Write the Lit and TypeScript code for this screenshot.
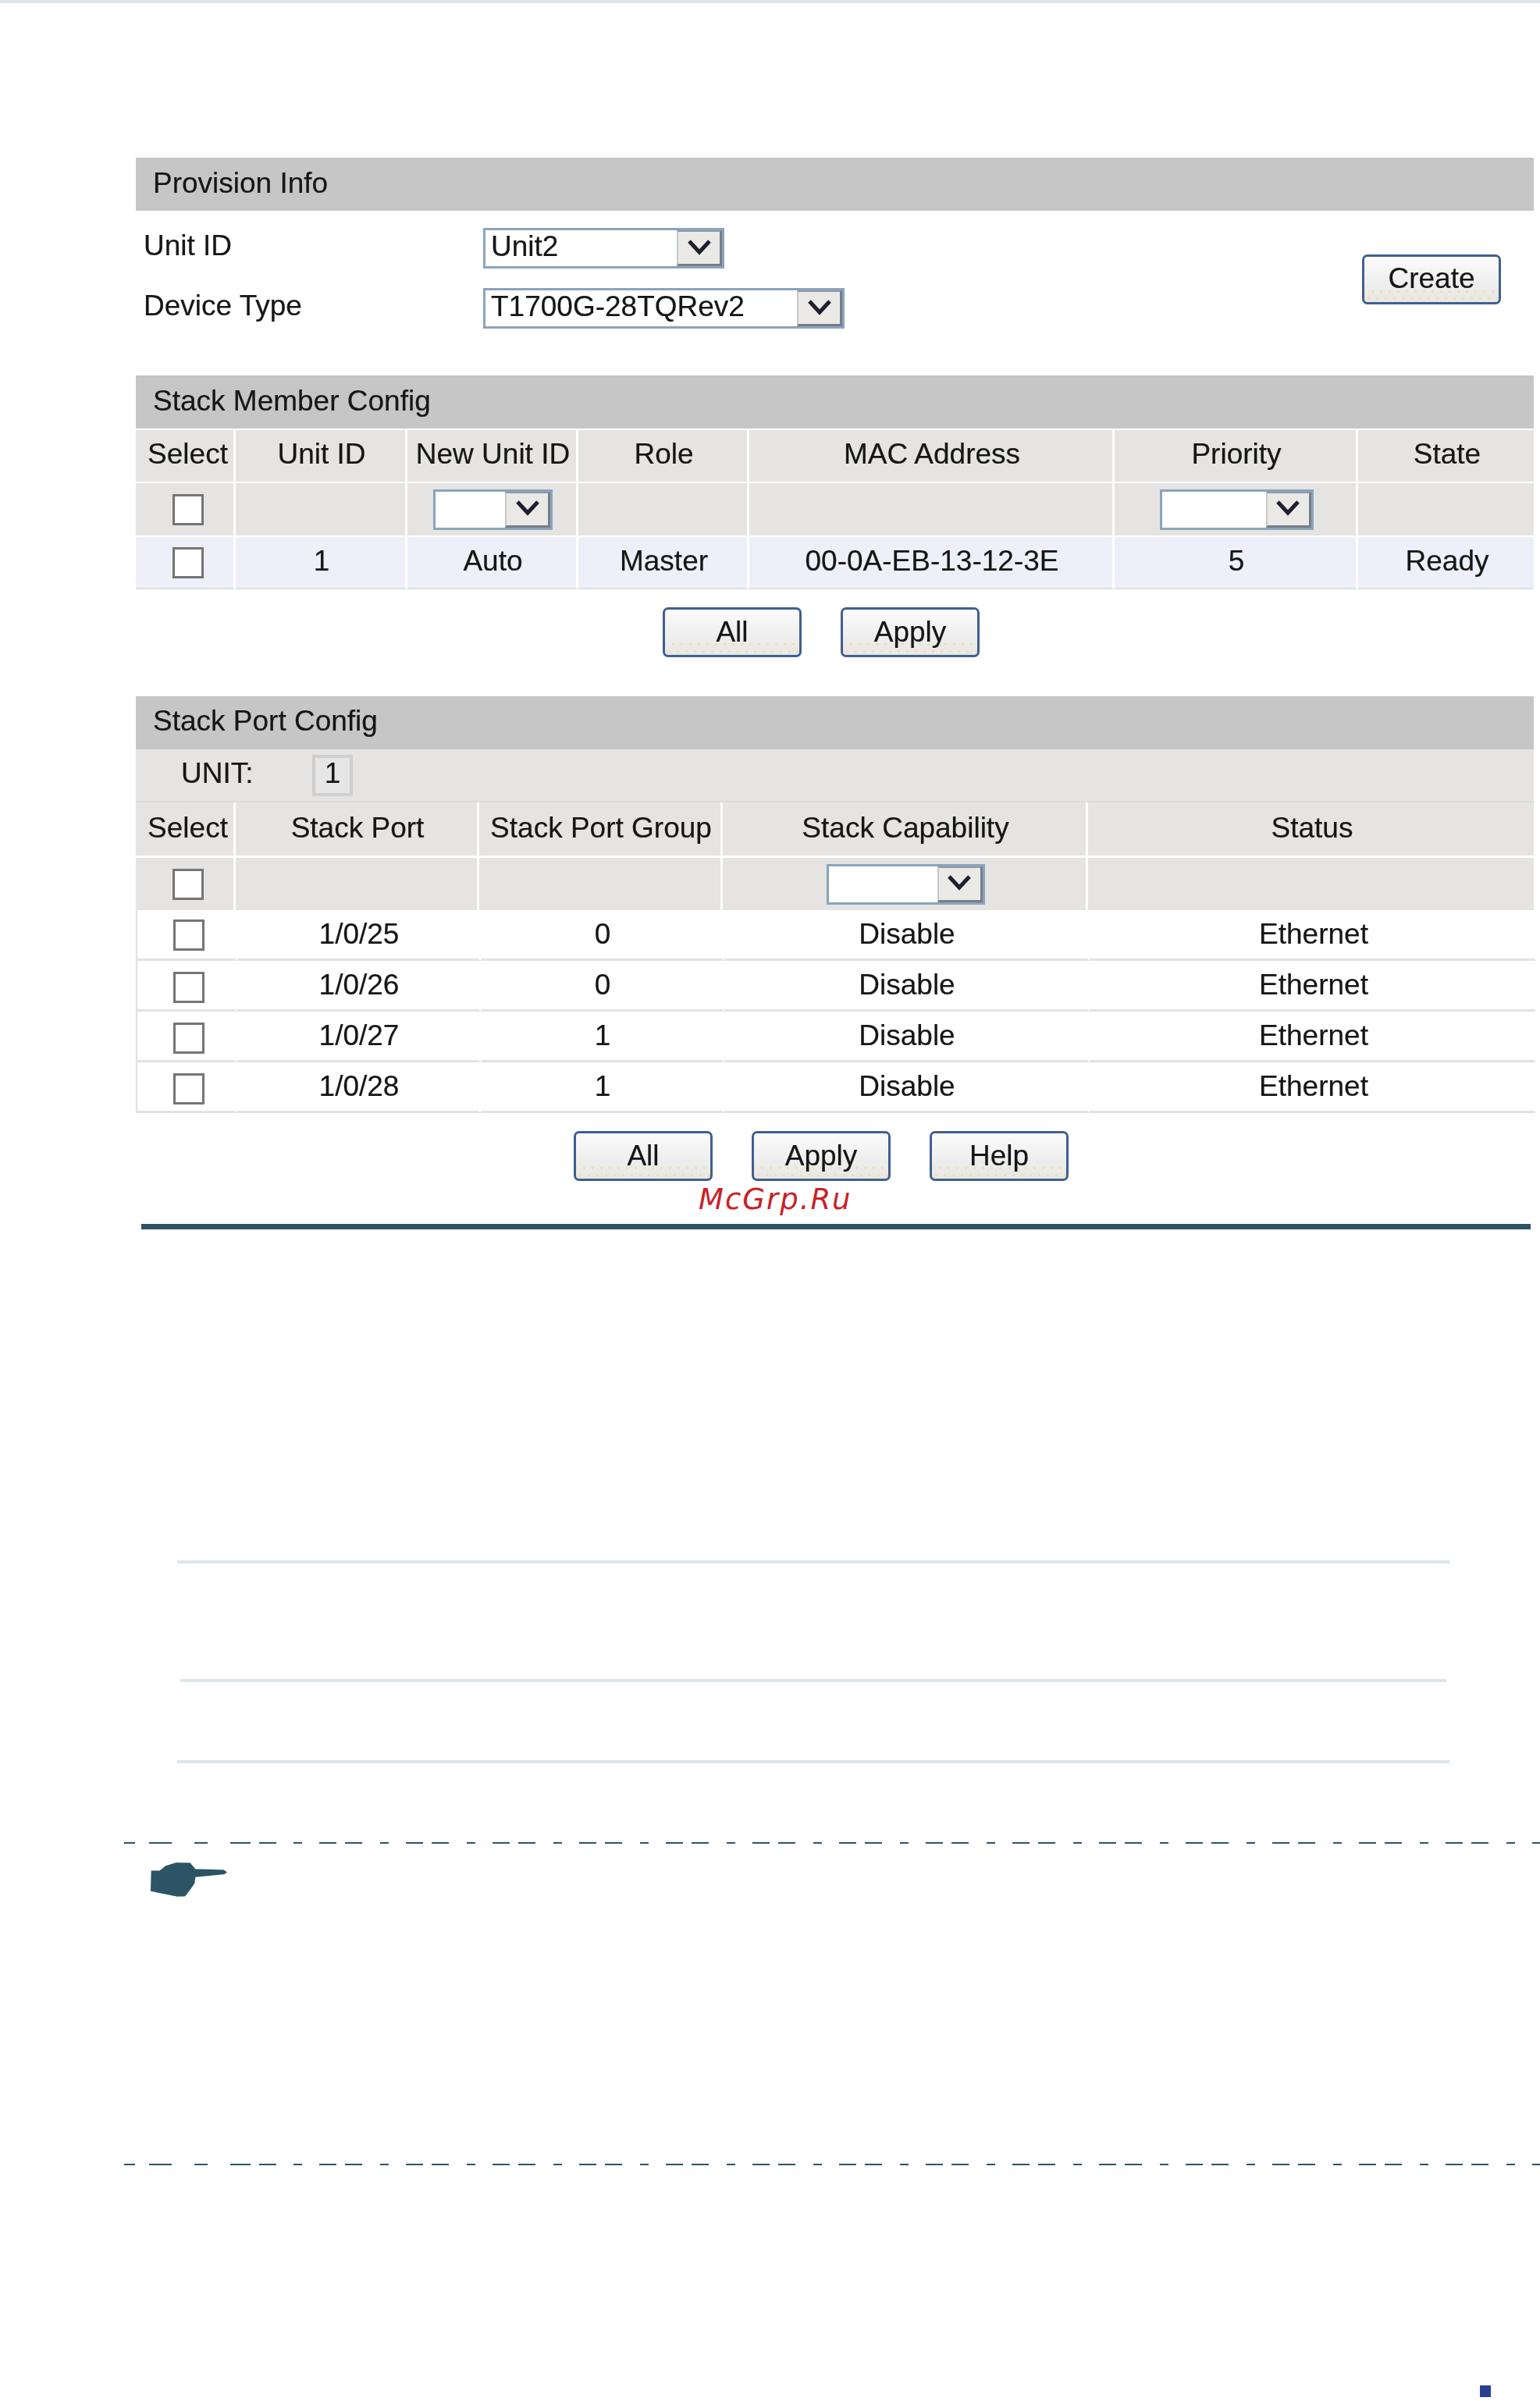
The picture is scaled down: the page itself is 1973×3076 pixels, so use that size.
import { LitElement, html, css, svg } from 'lit';
import { customElement } from 'lit/decorators.js';

const chevron = html`<svg class="chevron" viewBox="0 0 30 21"><path d="M2 3 L15 17 L28 3" /></svg>`;

// dashes of the note frame, irregular start and then a repeating run
const dashRuns = (): number[][] => {
  const runs = [[159, 173], [191, 220], [249, 266], [295, 321], [332, 354]];
  for (let x = 376; x < 1973; x += 111) {
    runs.push([x, x + 11], [x + 33, x + 55], [x + 66, x + 88]);
  }
  return runs;
};

const members = [{ unit: '1', newUnit: 'Auto', role: 'Master', mac: '00-0A-EB-13-12-3E', priority: '5', state: 'Ready' }];

const ports = [
  { port: '1/0/25', group: '0', cap: 'Disable', status: 'Ethernet' },
  { port: '1/0/26', group: '0', cap: 'Disable', status: 'Ethernet' },
  { port: '1/0/27', group: '1', cap: 'Disable', status: 'Ethernet' },
  { port: '1/0/28', group: '1', cap: 'Disable', status: 'Ethernet' },
];

@customElement('app-root')
export class AppRoot extends LitElement {
  static styles = css`
    :host {
      display: block;
      background: #fff;
      font-family: 'Liberation Sans', Arial, sans-serif;
      font-size: 37px;
      color: #161616;
      height: 3076px;
      overflow: hidden;
    }

    .topbar {
      height: 4px;
      background: #dce6eb;
    }

    .section {
      width: 1791px;
      margin-left: 174px;
      filter: blur(0.5px);
      -webkit-text-stroke: 0.2px #161616;
    }
    .section.first {
      margin-top: 198px;
    }
    .section.third {
      margin-top: 50px;
    }

    .title {
      height: 68px;
      line-height: 66px;
      padding-left: 22px;
      background: #c6c6c6;
    }
    .third .title {
      line-height: 63px;
    }

    .form {
      height: 211px;
      display: flex;
      justify-content: space-between;
      padding: 22px 42px 0 10px;
      box-sizing: border-box;
    }
    .fields {
      display: flex;
      flex-direction: column;
      gap: 25px;
    }
    .field {
      display: flex;
      align-items: center;
    }
    .field label {
      width: 435px;
      padding-bottom: 6px;
    }
    .form .btn {
      margin-top: 34px;
      padding-bottom: 3px;
    }

    .select {
      display: flex;
      height: 52px;
      box-sizing: border-box;
      border: 3px solid #8ba4bd;
      background: #fff;
      font-size: 37px;
    }
    .cell .select {
      margin-top: 3px;
    }
    .select .value {
      flex: 1;
      line-height: 42px;
      padding-left: 7px;
    }
    .select .arrow {
      width: 58px;
      box-sizing: border-box;
      display: flex;
      align-items: center;
      justify-content: center;
      background: #ebe9e6;
      border: 3px solid #757d88;
      border-left: 2px solid #c4c8cc;
      border-top: 2px solid #8a99aa;
    }
    .chevron {
      width: 30px;
      height: 21px;
      margin-bottom: 3px;
    }
    .chevron path {
      fill: none;
      stroke: #1c2030;
      stroke-width: 5;
    }
    .w-unit { width: 309px; }
    .w-device { width: 463px; }
    .w-new { width: 153px; }
    .w-priority { width: 197px; }
    .w-cap { width: 203px; }

    .row {
      display: grid;
      margin-top: 2px;
    }
    .member .row {
      grid-template-columns: 128px 220px 219px 219px 468px 312px 225px;
    }
    .port .row {
      grid-template-columns: 128px 312px 312px 468px 571px;
    }
    .cell {
      height: 66px;
      display: flex;
      align-items: center;
      justify-content: center;
      box-sizing: border-box;
      padding-left: 3px;
      padding-bottom: 3px;
      border-right: 3px solid #fff;
      background: #e5e4e2;
    }
    .cell:first-child {
      padding-left: 8px;
    }
    .cell:last-child {
      border-right: none;
    }
    .row.head .cell {
      padding-bottom: 5px;
    }
    .row.tall .cell {
      height: 67px;
    }
    .row.data .cell {
      background: #eeeff8;
      border-bottom: 2px solid #e0e0e0;
    }

    .port .row.head {
      margin-top: 0;
    }
    .port .row.head .cell {
      height: 68px;
      padding-bottom: 3px;
    }
    .port .row.tall {
      margin-top: 3px;
    }
    .port .row.data {
      margin-top: 0;
      border-left: 2px solid #e2e2e2;
    }
    .port .row.data .cell {
      height: 65px;
      background: #fff;
      padding-bottom: 1px;
      border-bottom: 3px solid #e2e2e2;
    }
    .port .row.data .cell:first-child {
      padding-left: 6px;
    }

    .check {
      width: 40px;
      height: 40px;
      box-sizing: border-box;
      margin-top: 3px;
      border: 3px solid #757575;
      background: #fff;
    }
    .row.data + .row.data .check {
      margin-top: 7px;
    }

    .unitrow {
      height: 66px;
      display: flex;
      align-items: center;
      padding-left: 58px;
      background: #e5e4e2;
      border-bottom: 2px solid #dcdcdc;
    }
    .unitrow .label {
      width: 168px;
      padding-bottom: 5px;
    }
    .badge {
      width: 52px;
      height: 53px;
      display: flex;
      align-items: center;
      justify-content: center;
      box-sizing: border-box;
      padding-bottom: 5px;
      border: 4px solid #cfcfcf;
      background: #e6e6e6;
    }

    .buttons {
      display: flex;
      gap: 50px;
      margin-top: 23px;
    }
    .buttons.member-buttons {
      padding-left: 675px;
    }
    .buttons.port-buttons {
      padding-left: 561px;
    }
    .btn {
      width: 178px;
      height: 64px;
      display: flex;
      align-items: center;
      justify-content: center;
      box-sizing: border-box;
      padding-bottom: 1px;
      border: 3px solid #3f5f92;
      border-radius: 7px;
      background:
        radial-gradient(circle, #f3dfb0 1.4px, transparent 1.8px) 0 100% / 11px 9px repeat-x,
        radial-gradient(circle, #f3dfb0 1.4px, transparent 1.8px) 5px calc(100% - 9px) / 11px 9px repeat-x,
        linear-gradient(#fbfbfb, #eeeeee 60%, #e9e7e2);
    }

    .watermark {
      height: 55px;
      padding-left: 895px;
      font-family: 'DejaVu Sans', sans-serif;
      font-style: italic;
      font-size: 37px;
      line-height: 48px;
      letter-spacing: 2px;
      color: #cc2026;
    }

    .rule {
      height: 7px;
      width: 1780px;
      margin-left: 181px;
      background: #2c5465;
    }

    .line {
      height: 4px;
      background: #dce6eb;
    }
    .line.a { margin: 424px 0 0 227px; width: 1630px; }
    .line.b { margin: 148px 0 0 231px; width: 1622px; }
    .line.c { margin: 100px 0 0 227px; width: 1630px; }

    .dashes {
      display: block;
      width: 1973px;
      height: 2px;
    }
    .dashes rect {
      fill: #2c5465;
    }
    .dashes.top { margin-top: 101px; }

    .hand {
      display: block;
      width: 98px;
      height: 44px;
      margin: 24px 0 342px 193px;
    }
    .hand path {
      fill: #2c5465;
    }

    .page-mark {
      width: 14px;
      height: 15px;
      margin: 282px 0 0 1896px;
      background: #2a3f8f;
    }
  `;

  renderSelect(width: string, value = '') {
    return html`<div class="select ${width}">
      <span class="value">${value}</span>
      <span class="arrow">${chevron}</span>
    </div>`;
  }

  renderDashes(extra = '') {
    return html`<svg class="dashes ${extra}" viewBox="0 0 1973 2">
      ${dashRuns().map(([a, b]) => svg`<rect x=${a} y="0" width=${b - a} height="2" />`)}
    </svg>`;
  }

  render() {
    return html`
      <div class="topbar"></div>

      <div class="section first">
        <div class="title">Provision Info</div>
        <div class="form">
          <div class="fields">
            <div class="field"><label>Unit ID</label>${this.renderSelect('w-unit', 'Unit2')}</div>
            <div class="field"><label>Device Type</label>${this.renderSelect('w-device', 'T1700G-28TQRev2')}</div>
          </div>
          <div class="btn">Create</div>
        </div>
      </div>

      <div class="section member">
        <div class="title">Stack Member Config</div>
        <div class="row head">
          ${['Select', 'Unit ID', 'New Unit ID', 'Role', 'MAC Address', 'Priority', 'State'].map((h) => html`<div class="cell">${h}</div>`)}
        </div>
        <div class="row tall">
          <div class="cell"><div class="check"></div></div>
          <div class="cell"></div>
          <div class="cell">${this.renderSelect('w-new')}</div>
          <div class="cell"></div>
          <div class="cell"></div>
          <div class="cell">${this.renderSelect('w-priority')}</div>
          <div class="cell"></div>
        </div>
        ${members.map((m) => html`
          <div class="row tall data">
            <div class="cell"><div class="check"></div></div>
            <div class="cell">${m.unit}</div>
            <div class="cell">${m.newUnit}</div>
            <div class="cell">${m.role}</div>
            <div class="cell">${m.mac}</div>
            <div class="cell">${m.priority}</div>
            <div class="cell">${m.state}</div>
          </div>
        `)}
        <div class="buttons member-buttons">
          <div class="btn">All</div>
          <div class="btn">Apply</div>
        </div>
      </div>

      <div class="section third port">
        <div class="title">Stack Port Config</div>
        <div class="unitrow">
          <span class="label">UNIT:</span>
          <span class="badge">1</span>
        </div>
        <div class="row head">
          ${['Select', 'Stack Port', 'Stack Port Group', 'Stack Capability', 'Status'].map((h) => html`<div class="cell">${h}</div>`)}
        </div>
        <div class="row tall">
          <div class="cell"><div class="check"></div></div>
          <div class="cell"></div>
          <div class="cell"></div>
          <div class="cell">${this.renderSelect('w-cap')}</div>
          <div class="cell"></div>
        </div>
        ${ports.map((p) => html`
          <div class="row data">
            <div class="cell"><div class="check"></div></div>
            <div class="cell">${p.port}</div>
            <div class="cell">${p.group}</div>
            <div class="cell">${p.cap}</div>
            <div class="cell">${p.status}</div>
          </div>
        `)}
        <div class="buttons port-buttons">
          <div class="btn">All</div>
          <div class="btn">Apply</div>
          <div class="btn">Help</div>
        </div>
      </div>

      <div class="watermark">McGrp.Ru</div>
      <div class="rule"></div>

      <div class="line a"></div>
      <div class="line b"></div>
      <div class="line c"></div>

      ${this.renderDashes('top')}
      <svg class="hand" viewBox="158 142 294 131">
        <path d="M160 173 L193 173 L215 155 L255 142 L310 143 L330 167 L440 170 L452 180 L440 187 L330 198 L327 222 L315 240 L290 272 L260 273 L185 258 L158 252 Z" />
      </svg>
      ${this.renderDashes()}
      <div class="page-mark"></div>
    `;
  }
}
